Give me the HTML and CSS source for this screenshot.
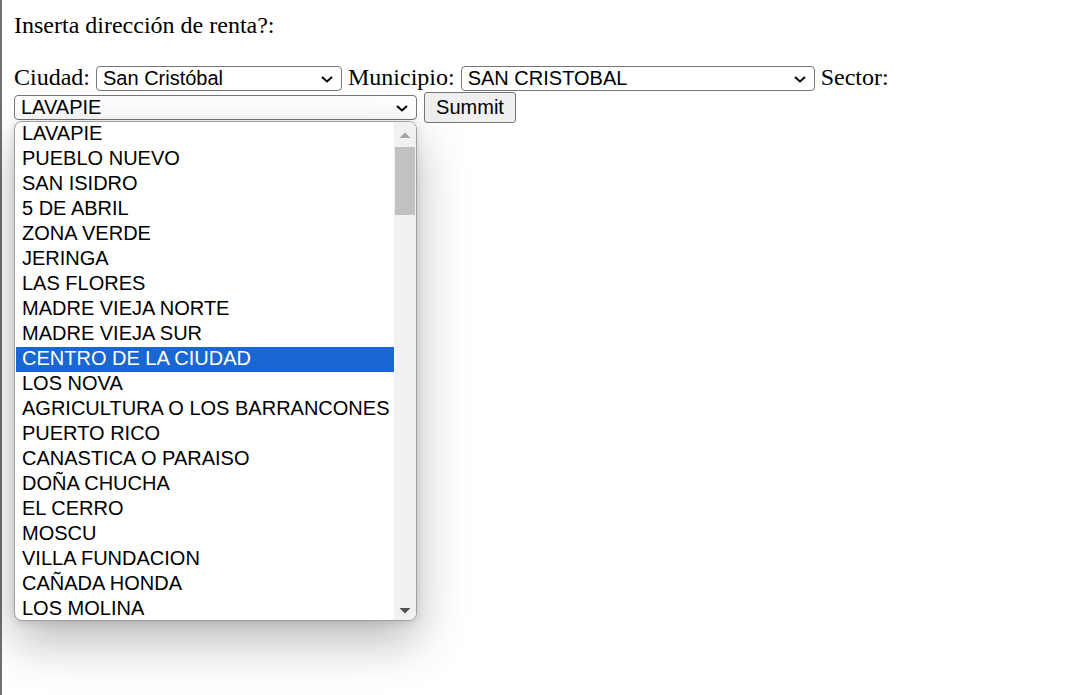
FILE: index.html
```html
<!DOCTYPE html>
<html lang="es">
<head>
<meta charset="utf-8">
<title>Inserta dirección de renta</title>
<link rel="stylesheet" href="styles.css">
</head>
<body>
<div class="frame">
  <form class="form">
    <div class="title">Inserta dirección de renta?:</div>
    <div class="fields">
      <label for="ciudad">Ciudad:</label>
      <span class="sel sel-ciudad"><select id="ciudad"><option>San Cristóbal</option></select><svg class="chev" viewBox="0 0 12 7" width="12" height="7"><path d="M1 1 L6 5.5 L11 1" fill="none" stroke="#000" stroke-width="2"/></svg></span>
      <label for="municipio">Municipio:</label>
      <span class="sel sel-municipio"><select id="municipio"><option>SAN CRISTOBAL</option></select><svg class="chev" viewBox="0 0 12 7" width="12" height="7"><path d="M1 1 L6 5.5 L11 1" fill="none" stroke="#000" stroke-width="2"/></svg></span>
      <label for="sector">Sector:</label>
      <span class="sel sel-sector"><select id="sector"><option>LAVAPIE</option></select><svg class="chev" viewBox="0 0 12 7" width="12" height="7"><path d="M1 1 L6 5.5 L11 1" fill="none" stroke="#000" stroke-width="2"/></svg>
        <div class="popup" role="listbox">
          <div class="items">
            <div class="item">LAVAPIE</div>
            <div class="item">PUEBLO NUEVO</div>
            <div class="item">SAN ISIDRO</div>
            <div class="item">5 DE ABRIL</div>
            <div class="item">ZONA VERDE</div>
            <div class="item">JERINGA</div>
            <div class="item">LAS FLORES</div>
            <div class="item">MADRE VIEJA NORTE</div>
            <div class="item">MADRE VIEJA SUR</div>
            <div class="item selected">CENTRO DE LA CIUDAD</div>
            <div class="item">LOS NOVA</div>
            <div class="item">AGRICULTURA O LOS BARRANCONES</div>
            <div class="item">PUERTO RICO</div>
            <div class="item">CANASTICA O PARAISO</div>
            <div class="item">DOÑA CHUCHA</div>
            <div class="item">EL CERRO</div>
            <div class="item">MOSCU</div>
            <div class="item">VILLA FUNDACION</div>
            <div class="item">CAÑADA HONDA</div>
            <div class="item">LOS MOLINA</div>
          </div>
          <div class="scrollbar">
            <svg class="arrow" viewBox="0 0 12 6" width="12" height="6"><path d="M0.5 6 L6 0.5 L11.5 6 Z" fill="#a3a3a3"/></svg>
            <div class="track"><div class="thumb"></div></div>
            <svg class="arrow" viewBox="0 0 12 6" width="12" height="6"><path d="M0.5 0 L6 5.5 L11.5 0 Z" fill="#505050"/></svg>
          </div>
        </div>
      </span>
      <button type="button" class="btn">Summit</button>
    </div>
  </form>
</div>
</body>
</html>
```

FILE: styles.css
```css
html, body {
  margin: 0;
  padding: 0;
  background: #ffffff;
}

body {
  font-family: "Liberation Serif", "Times New Roman", serif;
  font-size: 24px;
  color: #000;
}

.frame {
  border-left: 2px solid #707070;
  min-height: 695px;
  box-sizing: border-box;
  padding: 11px 12px 0 12px;
}

.title {
  line-height: 28px;
  margin-bottom: 24px;
}

.fields {
  line-height: 29px;
}

.sel {
  position: relative;
  display: inline-block;
  line-height: 0;
}

.sel select {
  -webkit-appearance: none;
  appearance: none;
  box-sizing: border-box;
  height: 25px;
  margin: 0;
  padding: 0 20px 0 6px;
  border: 1px solid #767676;
  border-radius: 4px;
  background: #fff;
  color: #000;
  font-family: "Liberation Sans", Arial, sans-serif;
  font-size: 20px;
  line-height: normal;
  vertical-align: baseline;
}

.sel-ciudad select { width: 246px; }
.sel-municipio select { width: 354px; }
.sel-sector select { width: 403px; }

.chev {
  position: absolute;
  right: 9px;
  top: 10px;
  pointer-events: none;
}

.btn {
  box-sizing: border-box;
  height: 31px;
  width: 92px;
  margin: 0 0 0 1px;
  padding: 0 8px;
  border: 1px solid #767676;
  border-radius: 3px;
  background: #efefef;
  color: #000;
  font-family: "Liberation Sans", Arial, sans-serif;
  font-size: 20px;
  vertical-align: baseline;
}

.popup {
  position: absolute;
  left: 0;
  top: 26px;
  width: 403px;
  height: 500px;
  box-sizing: border-box;
  border: 1px solid #a0a0a0;
  border-radius: 8px;
  background: #fff;
  display: flex;
  overflow: hidden;
  box-shadow: 0 20px 50px rgba(0, 0, 0, 0.28), 0 2px 8px rgba(0, 0, 0, 0.12);
  z-index: 10;
  line-height: normal;
}

.items {
  flex: 1;
  padding-left: 1px;
  font-family: "Liberation Sans", Arial, sans-serif;
  font-size: 20px;
  color: #000;
  overflow: hidden;
}

.item {
  height: 25px;
  line-height: 23px;
  padding-left: 6px;
  white-space: nowrap;
}

.item.selected {
  background: #1967d2;
  color: #fff;
}

.scrollbar {
  width: 22px;
  background: #f1f1f1;
  display: flex;
  flex-direction: column;
  align-items: center;
  padding: 10px 0 6px 0;
  box-sizing: border-box;
}

.arrow {
  flex: none;
}

.track {
  flex: 1;
  width: 100%;
  padding: 9px 1px 0 1px;
  box-sizing: border-box;
}

.thumb {
  height: 68px;
  background: #c1c1c1;
}
```
